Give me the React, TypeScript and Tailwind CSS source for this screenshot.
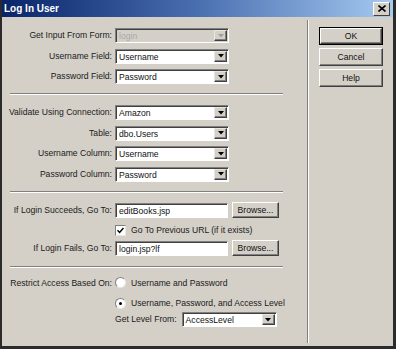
import React from 'react'

const font = { fontFamily: '"Liberation Sans", Arial, sans-serif' }

function Arrow({ disabled }: { disabled?: boolean }) {
  return (
    <span className="w-[13px] h-[11px] mt-[1px] mr-[1px] flex items-center justify-center bg-[#d4d0c8] border border-t-[#e8e6e0] border-l-[#e8e6e0] border-b-[#404040] border-r-[#404040] shadow-[inset_-1px_-1px_0_#808080]">
      <svg width="6" height="4" viewBox="0 0 6 4">
        <path d="M0 0h6L3 3.5z" fill={disabled ? '#a0a0a0' : '#000'} />
      </svg>
    </span>
  )
}

function Select({ value, disabled, wide }: { value: string; disabled?: boolean; wide?: boolean }) {
  return (
    <div
      className={`${wide ? 'w-[114px]' : 'w-[95px]'} h-[15px] flex border border-t-[#808080] border-l-[#808080] border-b-white border-r-white shadow-[inset_1px_1px_0_#404040] ${
        disabled ? 'bg-[#d4d0c8]' : 'bg-white'
      }`}
    >
      <span className={`flex-1 pl-[3px] pt-[1px] leading-[12px] truncate ${disabled ? 'text-[#a8a8a8]' : 'text-[#111]'}`}>{value}</span>
      <Arrow disabled={disabled} />
    </div>
  )
}

function TextBox({ value }: { value: string }) {
  return (
    <div className="w-[113px] h-[15px] bg-white border border-t-[#808080] border-l-[#808080] border-b-white border-r-white shadow-[inset_1px_1px_0_#404040] pl-[3px] pt-[1px] leading-[12px] text-[#111]">
      {value}
    </div>
  )
}

function Btn({ children, isDefault, small }: { children: React.ReactNode; isDefault?: boolean; small?: boolean }) {
  const inner = (
    <div className="h-full w-full flex items-center justify-center bg-[#d4d0c8] border border-t-white border-l-white border-b-[#404040] border-r-[#404040] shadow-[inset_-1px_-1px_0_#808080] text-[#111]">
      {children}
    </div>
  )
  if (small) return <div className="w-[47px] h-[16px]">{inner}</div>
  return <div className={`w-[64px] h-[18px] ${isDefault ? 'border border-black' : ''}`}>{inner}</div>
}

function Row({ label, children }: { label: string; children: React.ReactNode }) {
  return (
    <div className="flex items-center">
      <div className="w-[110px] text-right text-[#1a1a1a] whitespace-nowrap">{label}</div>
      <div className="ml-[3px] flex items-center gap-[4px]">{children}</div>
    </div>
  )
}

function Sep() {
  return <div className="ml-[8px] w-[273px] h-[2px] border-t border-t-[#808080] border-b border-b-white" />
}

function Radio({ checked }: { checked?: boolean }) {
  return (
    <span className="w-[11px] h-[11px] rounded-full bg-white border border-t-[#808080] border-l-[#808080] border-b-[#e8e6e0] border-r-[#e8e6e0] flex items-center justify-center">
      {checked && <span className="w-[3px] h-[3px] rounded-full bg-black" />}
    </span>
  )
}

export default function App() {
  return (
    <div className="w-[396px] h-[349px] bg-[#d4d0c8] border-l-2 border-r-[3px] border-b-[3px] border-[#2b2b2b] flex flex-col text-[8.6px] overflow-hidden" style={font}>
      <div className="h-[17px] shrink-0 bg-linear-to-r from-[#0a246a] via-[#4a6fb0] to-[#a6caf0] flex items-center justify-between pl-[2px]">
        <span className="text-white font-bold text-[10px]">Log In User</span>
        <span className="w-[17px] h-[14px] mr-[3px] bg-[#d4d0c8] border border-t-white border-l-white border-b-[#404040] border-r-[#404040] flex items-center justify-center">
          <svg width="8" height="7" viewBox="0 0 8 7">
            <path d="M0.5 0.5L7.5 6.5M7.5 0.5L0.5 6.5" stroke="#000" strokeWidth="1.6" />
          </svg>
        </span>
      </div>

      <div className="flex-1 flex">
        <div className="w-[305px] flex flex-col pt-[11px]">
          <div className="flex flex-col gap-[5.5px]">
            <Row label="Get Input From Form:">
              <Select value="login" disabled wide />
            </Row>
            <Row label="Username Field:">
              <Select value="Username" wide />
            </Row>
            <Row label="Password Field:">
              <Select value="Password" wide />
            </Row>
          </div>
          <div className="mt-[9px]">
            <Sep />
          </div>

          <div className="mt-[10px] flex flex-col gap-[5.5px]">
            <Row label="Validate Using Connection:">
              <Select value="Amazon" wide />
            </Row>
            <Row label="Table:">
              <Select value="dbo.Users" wide />
            </Row>
            <Row label="Username Column:">
              <Select value="Username" wide />
            </Row>
            <Row label="Password Column:">
              <Select value="Password" wide />
            </Row>
          </div>
          <div className="mt-[9.5px]">
            <Sep />
          </div>

          <div className="mt-[9px] flex flex-col">
            <Row label="If Login Succeeds, Go To:">
              <TextBox value="editBooks.jsp" />
              <Btn small>Browse...</Btn>
            </Row>
            <div className="mt-[5px] h-[15px] ml-[113px] flex items-center">
              <span className="w-[11px] h-[11px] bg-white border border-t-[#808080] border-l-[#808080] border-b-[#e8e6e0] border-r-[#e8e6e0] flex items-center justify-center">
                <svg width="7" height="7" viewBox="0 0 7 7">
                  <path d="M0.5 3.2L2.6 5.4L6.5 1" stroke="#000" strokeWidth="1.5" fill="none" />
                </svg>
              </span>
              <span className="ml-[5px] text-[#1a1a1a]">Go To Previous URL (if it exists)</span>
            </div>
            <div className="mt-[2px]">
              <Row label="If Login Fails, Go To:">
                <TextBox value="login.jsp?lf" />
                <Btn small>Browse...</Btn>
              </Row>
            </div>
          </div>
          <div className="mt-[10px]">
            <Sep />
          </div>

          <div className="mt-[8px] flex flex-col">
            <div className="h-[14px] flex items-center">
              <div className="w-[110px] text-right text-[#1a1a1a] whitespace-nowrap">Restrict Access Based On:</div>
              <div className="ml-[3px] flex items-center">
                <Radio />
                <span className="ml-[5px] text-[#1a1a1a]">Username and Password</span>
              </div>
            </div>
            <div className="mt-[6px] h-[14px] ml-[113px] flex items-center">
              <Radio checked />
              <span className="ml-[5px] text-[#1a1a1a]">Username, Password, and Access Level</span>
            </div>
            <div className="mt-[2px] ml-[113px] flex items-center">
              <span className="text-[#1a1a1a]">Get Level From:</span>
              <div className="ml-[5px]">
                <Select value="AccessLevel" />
              </div>
            </div>
          </div>
        </div>

        <div className="w-[2px] my-[3px] border-l border-l-[#808080] border-r border-r-white" />

        <div className="pl-[10px] pt-[10px] flex flex-col gap-[3px]">
          <Btn isDefault>OK</Btn>
          <Btn>Cancel</Btn>
          <Btn>Help</Btn>
        </div>
      </div>
    </div>
  )
}
